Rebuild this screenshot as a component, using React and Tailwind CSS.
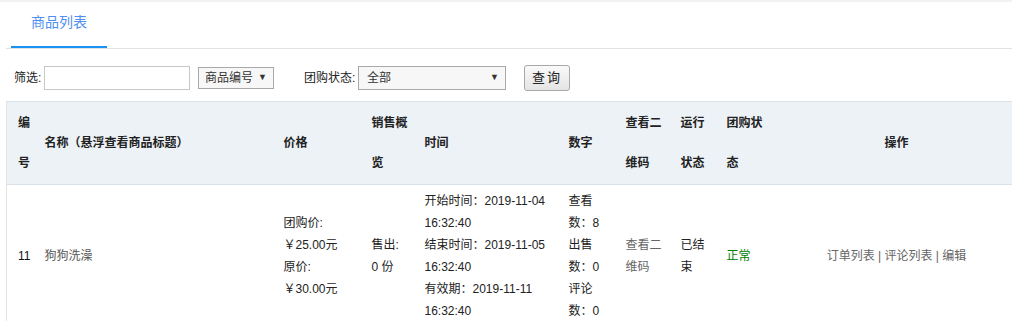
import React from 'react';

const cols = [34, 239, 88, 53, 144, 57, 55, 46, 52, 244];
const cell = 'pl-[4px] pr-[8px] py-[5px]';

const Select = ({ label, width }) => (
    <div className={`flex items-center justify-between border border-[#a9a9a9] bg-[#f7f7f7] text-[#333] pl-[6px] pr-[6px] ${width}`}>
        <span>{label}</span>
        <span className="text-[9px] text-[#333]">▼</span>
    </div>
);

const times = [
    ['开始时间：2019-11-04', '16:32:40'],
    ['结束时间：2019-11-05', '16:32:40'],
    ['有效期：2019-11-11', '16:32:40'],
];

const App = () => {
    return (
        <div className="w-full h-[321px] overflow-hidden bg-white text-[12px] text-[#333]" style={{ fontFamily: '"Liberation Sans", "Noto Sans CJK SC", sans-serif' }}>
            <div className="h-[2px] bg-[#f2f2f2]"></div>
            {/* tabs */}
            <div className="ml-[6px] border-b border-[#e2e2e2] flex">
                <div className="ml-[5px] w-[96px] h-[46px] flex items-center justify-center text-[14px] text-[#4f8ff2] border-b-2 border-[#1a93f5] pb-[4px]">
                    商品列表
                </div>
            </div>

            {/* filter */}
            <div className="flex items-center h-[26px] mt-[16px] pl-[14px]">
                <span className="w-[30px] text-[#222]">筛选:</span>
                <input type="text" className="w-[146px] h-[24px] border border-[#c8c8c8] outline-none" />
                <div className="ml-[8px] h-[22px] flex">
                    <Select label="商品编号" width="w-[76px]" />
                </div>
                <span className="ml-[30px] w-[54px] text-[#222]">团购状态:</span>
                <div className="h-[24px] flex">
                    <Select label="全部" width="w-[148px] pl-[8px]" />
                </div>
                <button className="ml-[18px] w-[46px] h-[26px] rounded-[3px] border border-[#a8a8a8] bg-gradient-to-b from-[#fafafa] to-[#e4e4e4] text-[13px] text-[#222] tracking-[2px]">
                    查询
                </button>
            </div>

            {/* table */}
            <table className="table-fixed border-collapse ml-[6px] mt-[10px] w-[1006px]">
                <colgroup>
                    {cols.map((w, i) => (
                        <col key={i} style={{ width: w }} />
                    ))}
                </colgroup>
                <thead>
                    <tr className="bg-[#edf2f7] border-y border-[#d9e1e9] font-bold text-[#222] leading-[40px] text-left">
                        <th className="pl-[11px] pr-[8px] py-[1px] border-l border-[#e3e3e3]">编号</th>
                        <th className="pl-[4px] pr-[8px]">名称（悬浮查看商品标题）</th>
                        <th className="pl-[4px] pr-[8px]">价格</th>
                        <th className="pl-[4px] pr-[8px]">销售概览</th>
                        <th className="pl-[4px] pr-[8px]">时间</th>
                        <th className="pl-[4px] pr-[8px]">数字</th>
                        <th className="pl-[4px] pr-[8px]">查看二维码</th>
                        <th className="pl-[4px] pr-[8px]">运行状态</th>
                        <th className="pl-[4px] pr-[8px]">团购状态</th>
                        <th className="text-center">操作</th>
                    </tr>
                </thead>
                <tbody>
                    <tr className="leading-[22px] align-middle">
                        <td className="pl-[11px] pr-[8px] py-[5px] border-l border-[#e3e3e3] text-[#111]">11</td>
                        <td className={`${cell} text-[#555]`}>狗狗洗澡</td>
                        <td className={`${cell} text-[#222]`}>
                            <div>团购价:</div>
                            <div>￥25.00元</div>
                            <div>原价:</div>
                            <div>￥30.00元</div>
                        </td>
                        <td className={`${cell} text-[#222]`}>
                            <div>售出:</div>
                            <div>0 份</div>
                        </td>
                        <td className={`${cell} text-[#222]`}>
                            {times.map(([a, b]) => (
                                <div key={a}>
                                    <div>{a}</div>
                                    <div>{b}</div>
                                </div>
                            ))}
                        </td>
                        <td className={`${cell} text-[#222]`}>查看数：8 出售数：0 评论数：0</td>
                        <td className={`${cell} text-[#666]`}>查看二维码</td>
                        <td className={`${cell} text-[#222]`}>已结束</td>
                        <td className={`${cell} text-[#008000]`}>正常</td>
                        <td className="py-[5px] text-center text-[#666]">订单列表 | 评论列表 | 编辑</td>
                    </tr>
                </tbody>
            </table>
        </div>
    );
};

export default App;
